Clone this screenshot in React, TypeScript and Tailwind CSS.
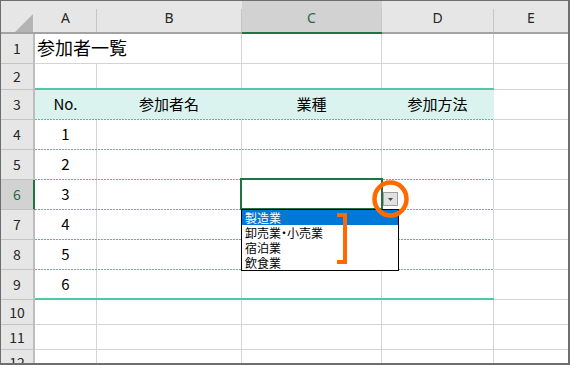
import React from 'react';

type Line = 'grid' | 'solid' | 'dash';

function HeadCell({ w, label, sel, sep = true }: { w: string; label: string; sel?: boolean; sep?: boolean }) {
  return (
    <div
      className={`${w} flex h-full border-b-2 ${
        sel ? 'border-[#217346] bg-[#d2d2d2] text-[#1d6b41]' : 'border-[#a3a3a3] bg-[#e6e6e6] text-[#262626]'
      }`}
    >
      <div className="flex flex-1 justify-center pt-[7px] text-[14px] leading-[20px] font-['Noto_Sans',sans-serif]">{label}</div>
      {sep && <div className="mt-[8px] w-px bg-[#c6c6c6]" />}
    </div>
  );
}

function RowHead({ n, sel }: { n: number; sel?: boolean }) {
  return (
    <div
      className={`flex w-[34px] items-center justify-center border-r-2 border-b border-b-[#c4c4c4] text-[14px] font-['Noto_Sans_CJK_JP',sans-serif] ${
        sel ? 'bg-[#d2d2d2] border-r-[#217346] text-[#1d6b41]' : 'bg-[#e6e6e6] border-r-[#bdbdbd] text-[#262626]'
      }`}
    >
      {n}
    </div>
  );
}

function Group({ line, children }: { line: Line; children: React.ReactNode }) {
  return (
    <div className="flex w-[459px] flex-col">
      <div className="flex min-h-0 flex-1">{children}</div>
      {line === 'grid' && <div className="h-px bg-[#d4d4d4]" />}
      {line === 'solid' && <div className="h-[2px] bg-[#4fc7a9]" />}
      {line === 'dash' && (
        <div className="h-px bg-white bg-[image:repeating-linear-gradient(90deg,#45c2a3_0_2px,transparent_2px_3px)]" />
      )}
    </div>
  );
}

function Cell({ w, children, cls = '' }: { w: string; children?: React.ReactNode; cls?: string }) {
  return (
    <div className={`${w} flex items-center justify-center border-r ${cls || 'border-[#d4d4d4]'}`}>{children}</div>
  );
}

function ECell() {
  return <div className="w-[74px] border-b border-[#d4d4d4]" />;
}

function Row({
  n,
  h,
  line,
  sel,
  children,
}: {
  n: number;
  h: string;
  line: Line;
  sel?: boolean;
  children?: React.ReactNode;
}) {
  return (
    <div className={`flex shrink-0 ${h}`}>
      <RowHead n={n} sel={sel} />
      <Group line={line}>
        {children ?? (
          <>
            <Cell w="w-[62px]" />
            <Cell w="w-[145px]" />
            <Cell w="w-[140px]" />
            <Cell w="w-[112px]" />
          </>
        )}
      </Group>
      <ECell />
    </div>
  );
}

function DataRow({ n, num, line, sel }: { n: number; num: number; line: Line; sel?: boolean }) {
  return (
    <Row n={n} h="h-[30px]" line={line} sel={sel}>
      <Cell w="w-[62px]">{num}</Cell>
      <Cell w="w-[145px]" />
      <Cell w="w-[140px]" />
      <Cell w="w-[112px]" />
    </Row>
  );
}

export default function App() {
  return (
    <div className="relative h-[365px] w-[570px] overflow-hidden bg-white text-black font-['Noto_Sans_CJK_JP',sans-serif]">
      <div className="flex h-full w-full flex-col overflow-hidden border-l border-t border-r-2 border-b-2 border-[#6e6e6e]">
        {/* column header */}
        <div className="flex h-[33px] shrink-0">
          <div className="flex w-[34px] items-end justify-end border-b-2 border-[#a3a3a3] bg-[#e6e6e6] pr-[1px]">
            <svg width="19" height="18" viewBox="0 0 19 18" className="block">
              <polygon points="18,0 18,18 0,18" fill="#b4b4b4" />
            </svg>
          </div>
          <HeadCell w="w-[62px]" label="A" />
          <HeadCell w="w-[145px]" label="B" />
          <HeadCell w="w-[140px]" label="C" sel />
          <HeadCell w="w-[112px]" label="D" />
          <HeadCell w="w-[74px]" label="E" sep={false} />
        </div>

        {/* row 1 */}
        <Row n={1} h="h-[30px]" line="grid">
          <div className="relative z-10 flex w-[62px] items-center justify-start overflow-visible whitespace-nowrap pl-[2px] pb-[2px] text-[18px]">
            参加者一覧
          </div>
          <div className="w-[145px] border-r border-[#d4d4d4]" />
          <Cell w="w-[140px]" />
          <Cell w="w-[112px]" />
        </Row>

        {/* row 2 */}
        <Row n={2} h="h-[26px]" line="solid" />

        {/* row 3 header of table */}
        <Row n={3} h="h-[30px]" line="dash">
          <Cell w="w-[62px]" cls="border-[#daf3ee] bg-[#daf3ee] text-[15px]">No.</Cell>
          <Cell w="w-[145px]" cls="border-[#daf3ee] bg-[#daf3ee] text-[15px]">参加者名</Cell>
          <Cell w="w-[140px]" cls="border-[#daf3ee] bg-[#daf3ee] text-[15px]">業種</Cell>
          <Cell w="w-[112px]" cls="border-[#daf3ee] bg-[#daf3ee] text-[15px]">参加方法</Cell>
        </Row>

        <div className="contents text-[15px]">
          <DataRow n={4} num={1} line="dash" />
          <DataRow n={5} num={2} line="dash" />
          <DataRow n={6} num={3} line="dash" sel />
          <DataRow n={7} num={4} line="dash" />
          <DataRow n={8} num={5} line="dash" />
          <DataRow n={9} num={6} line="solid" />
        </div>

        <Row n={10} h="h-[25px]" line="grid" />
        <Row n={11} h="h-[25px]" line="grid" />
        <Row n={12} h="h-[25px]" line="grid" />
      </div>

      {/* selected cell C6 */}
      <div className="absolute left-[240px] top-[178px] h-[32px] w-[143px] border-2 border-[#217346]" />

      {/* dropdown button */}
      <div className="absolute left-[383px] top-[192px] flex h-[14px] w-[15px] items-center justify-center border border-[#a0a0a0] bg-[#e1e1e1]">
        <svg width="5" height="3" viewBox="0 0 5 3" className="block">
          <polygon points="0,0 5,0 2.5,3" fill="#4a4a4a" />
        </svg>
      </div>

      {/* dropdown list */}
      <div className="absolute left-[241px] top-[209px] flex h-[62px] w-[158px] flex-col border border-black bg-white text-[12px] [font-feature-settings:'palt']">
        <div className="flex h-[15px] items-center overflow-hidden bg-[#0078d7] pl-[3px] leading-[13px] text-white">製造業</div>
        <div className="flex h-[15px] items-center overflow-hidden pl-[3px] leading-[13px]">卸売業・小売業</div>
        <div className="flex h-[15px] items-center overflow-hidden pl-[3px] leading-[13px]">宿泊業</div>
        <div className="flex h-[15px] items-center overflow-hidden pl-[3px] leading-[13px]">飲食業</div>
      </div>

      {/* annotations */}
      <svg className="pointer-events-none absolute left-0 top-0" width="570" height="365" viewBox="0 0 570 365">
        <ellipse cx="390.5" cy="199" rx="16" ry="16.5" fill="none" stroke="#ff6a00" strokeWidth="4.5" />
        <path d="M337 215 H345 V262 H337" fill="none" stroke="#ff6a00" strokeWidth="4" strokeLinejoin="miter" />
      </svg>
    </div>
  );
}
